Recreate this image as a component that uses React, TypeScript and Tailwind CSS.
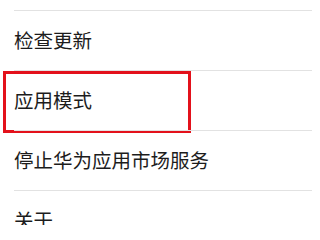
const items = ["检查更新", "应用模式", "停止华为应用市场服务", "关于"];

export default function App() {
  return (
    <div
      className="w-[312px] h-[225px] overflow-hidden bg-white pt-[10px]"
      style={{ fontFamily: '"Noto Sans CJK SC", "Noto Sans", sans-serif' }}
    >
      {items.map((label, i) => (
        <div
          key={label}
          className="relative ml-[14px] h-[60px] border-t border-[#e2e2e2] flex items-center text-[19.5px] leading-none text-[#1c1c1c]"
        >
          <span className="-mt-px">{label}</span>
          {/* highlight box */}
          {i === 1 && (
            <div className="absolute left-[-11px] top-0 w-[188px] h-[62px] border-[3px] border-[#e3111b]" />
          )}
        </div>
      ))}
    </div>
  );
}
